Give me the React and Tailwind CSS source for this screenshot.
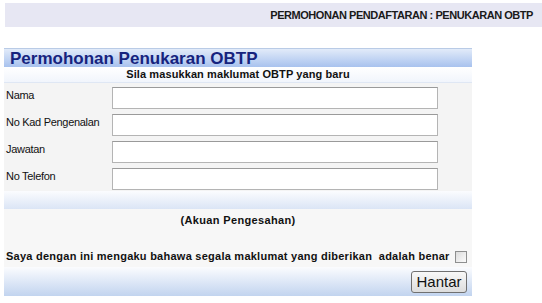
import { useState } from 'react'

const fields = ['Nama', 'No Kad Pengenalan', 'Jawatan', 'No Telefon']

export default function App() {
  const [agree, setAgree] = useState(false)

  return (
    <div className="w-[542px] h-[303px] bg-white overflow-hidden font-['Liberation_Sans',Arial,sans-serif] text-[#111]">
      {/* Top breadcrumb bar */}
      <div className="mt-[3px] ml-[5px] h-[24px] bg-[#e7e7f3] flex items-center justify-end pr-[9px]">
        <span className="text-[11px] font-bold tracking-[-0.45px] text-[#1a1a1a]">
          PERMOHONAN PENDAFTARAN : PENUKARAN OBTP
        </span>
      </div>

      {/* Form panel */}
      <div className="mt-[21px] ml-[4px] w-[468px]">
        <div className="h-[19px] border-t border-[#b9cbe6] bg-gradient-to-b from-[#e2ebf9] to-[#a8c2ee] flex items-center pl-[6px]">
          <span className="text-[17px] font-bold leading-none text-[#16237e]">Permohonan Penukaran OBTP</span>
        </div>
        <div className="h-[16px] bg-gradient-to-b from-white to-[#f1f5fc] border-b border-[#dfe7f4] flex items-center justify-center">
          <span className="text-[11px] font-bold tracking-[0.1px]">Sila masukkan maklumat OBTP yang baru</span>
        </div>

        <div className="bg-[#f4f4f4]">
          {fields.map((f) => (
            <div key={f} className="h-[27px] flex items-start">
              <label className="w-[108px] pl-[2px] pt-[6px] text-[11px] leading-[13px] tracking-[-0.3px]">{f}</label>
              <input
                type="text"
                className="mt-[4px] w-[326px] h-[22px] bg-white border border-[#b4b4b4] border-t-[#9a9a9a] outline-none px-1 text-[11px]"
              />
            </div>
          ))}
        </div>

        <div className="h-[18px] bg-gradient-to-b from-[#fbfcfe] to-[#dbe5f5]" />

        <div className="bg-[#f7f7f7] h-[58px] flex flex-col">
          <div className="text-center text-[11px] font-bold pt-[3px] tracking-[0.35px]">(Akuan Pengesahan)</div>
          <div className="mt-auto h-[21px] flex items-center justify-end pr-[5px] pl-[2px]">
            <span className="flex-1 text-[11px] font-bold whitespace-pre tracking-[0.25px]">
              Saya dengan ini mengaku bahawa segala maklumat yang diberikan  adalah benar
            </span>
            <span
              onClick={() => setAgree(!agree)}
              className="w-[12px] h-[12px] border border-[#8e8f8f] bg-gradient-to-br from-[#dcdcdc] to-[#fbfbfb] ml-[4px]"
            >
              {agree && <span className="block text-[10px] leading-[10px] text-center">✓</span>}
            </span>
          </div>
        </div>

        <div className="h-[29px] bg-gradient-to-b from-[#fbfcfe] to-[#c2d4ef] flex items-center justify-end pr-[5px]">
          <button className="w-[56px] h-[22px] rounded-[3px] border border-[#707070] bg-gradient-to-b from-[#f8f8f8] to-[#dddddd] text-[15px] leading-none text-[#111]">
            Hantar
          </button>
        </div>
      </div>
    </div>
  )
}
